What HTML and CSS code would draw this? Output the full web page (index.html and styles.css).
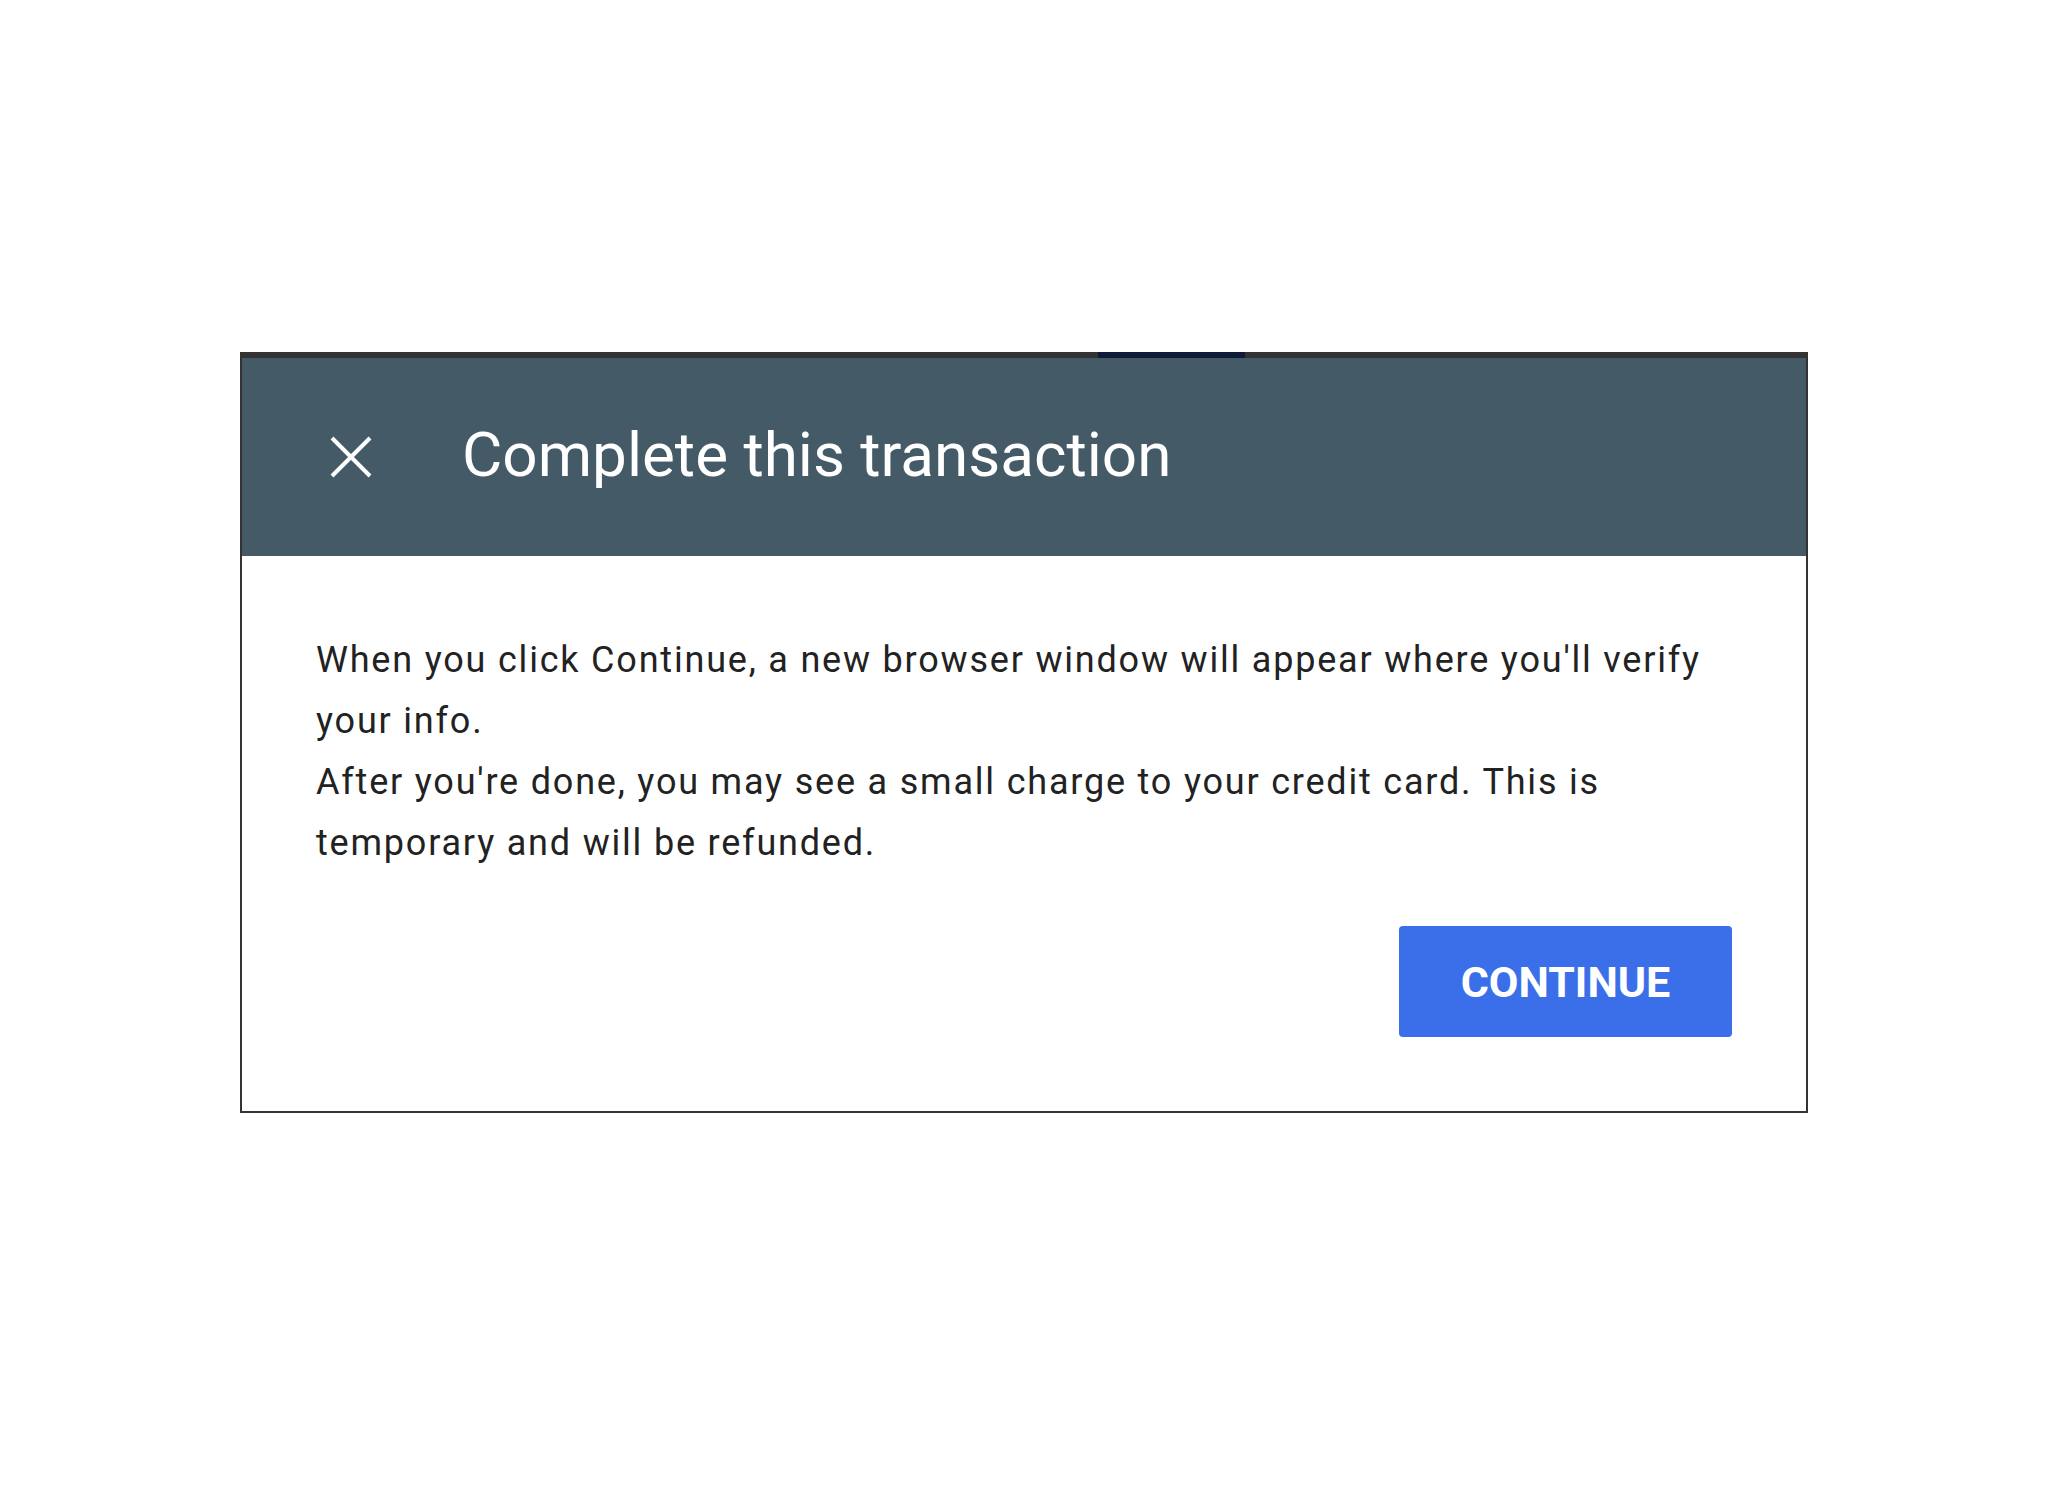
FILE: index.html
```html
<!DOCTYPE html>
<html lang="en">
<head>
<meta charset="utf-8">
<title>Complete this transaction</title>
<link rel="stylesheet" href="styles.css">
</head>
<body>
<div class="dialog">
  <span class="top-accent"></span>
  <header class="dialog-header">
    <button class="close-btn" aria-label="Close">
      <svg width="44" height="44" viewBox="0 0 44 44" aria-hidden="true">
        <path d="M3 3 L41 41 M41 3 L3 41" stroke="#ffffff" stroke-width="4" stroke-linecap="butt" fill="none"/>
      </svg>
    </button>
    <h1 class="dialog-title">Complete this transaction</h1>
  </header>
  <section class="dialog-body">
    <p class="dialog-text">When you click Continue, a new browser window will appear where you'll verify your info.</p>
    <p class="dialog-text">After you're done, you may see a small charge to your credit card. This is temporary and will be refunded.</p>
    <div class="dialog-actions">
      <button class="continue-btn">CONTINUE</button>
    </div>
  </section>
</div>
</body>
</html>
```

FILE: styles.css
```css
html, body {
  margin: 0;
  padding: 0;
  background: #ffffff;
}

body {
  font-family: Roboto, "Liberation Sans", Arial, sans-serif;
  padding-top: 352px;
  padding-left: 240px;
}

.dialog {
  position: relative;
  width: 1564px;
  border: 2px solid #333333;
  border-top: 6px solid #333333;
  background: #ffffff;
}

.top-accent {
  position: absolute;
  top: -6px;
  left: 856px;
  width: 147px;
  height: 6px;
  background: #101b38;
}

.dialog-header {
  display: flex;
  align-items: center;
  height: 198px;
  background: #445a66;
  padding-left: 87px;
}

.close-btn {
  display: flex;
  align-items: center;
  justify-content: center;
  width: 44px;
  height: 44px;
  padding: 0;
  border: none;
  background: transparent;
  margin-right: 89px;
  cursor: pointer;
}

.dialog-title {
  margin: 0;
  font-family: Roboto, "Liberation Sans", Arial, sans-serif;
  font-weight: 400;
  font-size: 62px;
  line-height: 1;
  color: #ffffff;
  padding-bottom: 4px;
}

.dialog-body {
  padding: 74px 74px 74px 74px;
}

.dialog-text {
  margin: 0;
  font-size: 36px;
  line-height: 61px;
  letter-spacing: 1.8px;
  color: #222222;
}

.dialog-actions {
  display: flex;
  justify-content: flex-end;
  margin-top: 52px;
}

.continue-btn {
  width: 333px;
  height: 111px;
  border: none;
  border-radius: 4px;
  background: #3b6fe9;
  color: #ffffff;
  font-family: Roboto, "Liberation Sans", Arial, sans-serif;
  font-weight: 700;
  font-size: 43px;
  letter-spacing: 0;
  cursor: pointer;
}
```
